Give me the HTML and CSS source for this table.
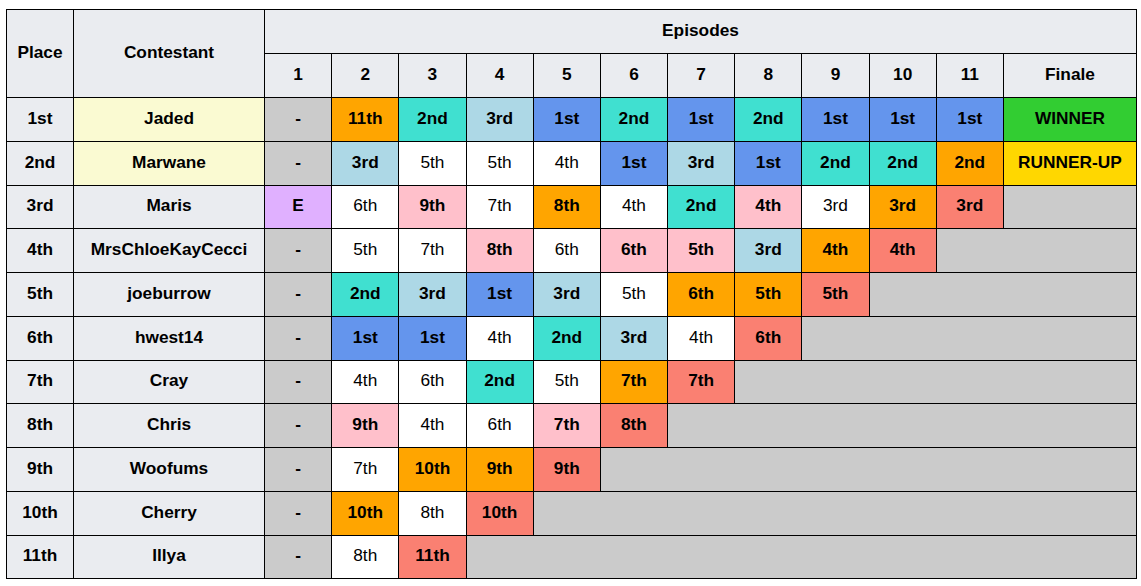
FILE: index.html
```html
<!DOCTYPE html>
<html>
<head>
<meta charset="utf-8">
<link rel="stylesheet" href="styles.css">
</head>
<body>
<table class="results">
  <colgroup>
    <col class="c-place"><col class="c-name">
    <col class="c-ep"><col class="c-ep"><col class="c-ep"><col class="c-ep"><col class="c-ep"><col class="c-ep"><col class="c-ep"><col class="c-ep"><col class="c-ep"><col class="c-ep"><col class="c-ep">
    <col class="c-fin">
  </colgroup>
  <thead>
    <tr class="hrow">
      <th rowspan="2">Place</th>
      <th rowspan="2">Contestant</th>
      <th colspan="12">Episodes</th>
    </tr>
    <tr class="hrow">
      <th>1</th><th>2</th><th>3</th><th>4</th><th>5</th><th>6</th><th>7</th><th>8</th><th>9</th><th>10</th><th>11</th><th>Finale</th>
    </tr>
  </thead>
  <tbody>
    <tr>
      <th>1st</th><th class="fin">Jaded</th>
      <td class="na">-</td><td class="or">11th</td><td class="tq">2nd</td><td class="lb">3rd</td><td class="bl">1st</td><td class="tq">2nd</td><td class="bl">1st</td><td class="tq">2nd</td><td class="bl">1st</td><td class="bl">1st</td><td class="bl">1st</td><td class="win">WINNER</td>
    </tr>
    <tr>
      <th>2nd</th><th class="fin">Marwane</th>
      <td class="na">-</td><td class="lb">3rd</td><td class="w">5th</td><td class="w">5th</td><td class="w">4th</td><td class="bl">1st</td><td class="lb">3rd</td><td class="bl">1st</td><td class="tq">2nd</td><td class="tq">2nd</td><td class="or">2nd</td><td class="ru">RUNNER-UP</td>
    </tr>
    <tr>
      <th>3rd</th><th>Maris</th>
      <td class="ex">E</td><td class="w">6th</td><td class="pk">9th</td><td class="w">7th</td><td class="or">8th</td><td class="w">4th</td><td class="tq">2nd</td><td class="pk">4th</td><td class="w">3rd</td><td class="or">3rd</td><td class="sa">3rd</td><td class="out"></td>
    </tr>
    <tr>
      <th>4th</th><th>MrsChloeKayCecci</th>
      <td class="na">-</td><td class="w">5th</td><td class="w">7th</td><td class="pk">8th</td><td class="w">6th</td><td class="pk">6th</td><td class="pk">5th</td><td class="lb">3rd</td><td class="or">4th</td><td class="sa">4th</td><td class="out" colspan="2"></td>
    </tr>
    <tr>
      <th>5th</th><th>joeburrow</th>
      <td class="na">-</td><td class="tq">2nd</td><td class="lb">3rd</td><td class="bl">1st</td><td class="lb">3rd</td><td class="w">5th</td><td class="or">6th</td><td class="or">5th</td><td class="sa">5th</td><td class="out" colspan="3"></td>
    </tr>
    <tr>
      <th>6th</th><th>hwest14</th>
      <td class="na">-</td><td class="bl">1st</td><td class="bl">1st</td><td class="w">4th</td><td class="tq">2nd</td><td class="lb">3rd</td><td class="w">4th</td><td class="sa">6th</td><td class="out" colspan="4"></td>
    </tr>
    <tr>
      <th>7th</th><th>Cray</th>
      <td class="na">-</td><td class="w">4th</td><td class="w">6th</td><td class="tq">2nd</td><td class="w">5th</td><td class="or">7th</td><td class="sa">7th</td><td class="out" colspan="5"></td>
    </tr>
    <tr>
      <th>8th</th><th>Chris</th>
      <td class="na">-</td><td class="pk">9th</td><td class="w">4th</td><td class="w">6th</td><td class="pk">7th</td><td class="sa">8th</td><td class="out" colspan="6"></td>
    </tr>
    <tr>
      <th>9th</th><th>Woofums</th>
      <td class="na">-</td><td class="w">7th</td><td class="or">10th</td><td class="or">9th</td><td class="sa">9th</td><td class="out" colspan="7"></td>
    </tr>
    <tr>
      <th>10th</th><th>Cherry</th>
      <td class="na">-</td><td class="or">10th</td><td class="w">8th</td><td class="sa">10th</td><td class="out" colspan="8"></td>
    </tr>
    <tr>
      <th>11th</th><th>Illya</th>
      <td class="na">-</td><td class="w">8th</td><td class="sa">11th</td><td class="out" colspan="9"></td>
    </tr>
  </tbody>
</table>
</body>
</html>
```
FILE: styles.css
```css
html, body {
  background: #ffffff;
}
body {
  margin: 9px 0 0 6px;
  font-family: "Liberation Sans", Arial, sans-serif;
  font-size: 17.3px;
  color: #000;
}
.results {
  border-collapse: collapse;
  table-layout: fixed;
  width: 1131px;
}
.c-place { width: 67px; }
.c-name { width: 191px; }
.c-ep { width: 67.18px; }
.c-fin { width: 133px; }

.results th,
.results td {
  border: 1px solid #000;
  padding: 0 2px 2px;
  text-align: center;
  vertical-align: middle;
  line-height: 19px;
  font-weight: bold;
}
.results th {
  background: #eaecf0;
}
.hrow { height: 44px; }
.results tbody tr { height: 43.75px; }

.results th.fin { background: #fafad2; }
.results td.w { background: #ffffff; font-weight: normal; }
.na, .out { background: #cbcbcb; }
.or { background: #ffa500; }
.tq { background: #40e0d0; }
.lb { background: #add8e6; }
.bl { background: #6495ed; }
.pk { background: #ffc0cb; }
.sa { background: #fa8072; }
.ex { background: #e0b0ff; }
.win { background: #32cd32; }
.ru { background: #ffd700; }
```
